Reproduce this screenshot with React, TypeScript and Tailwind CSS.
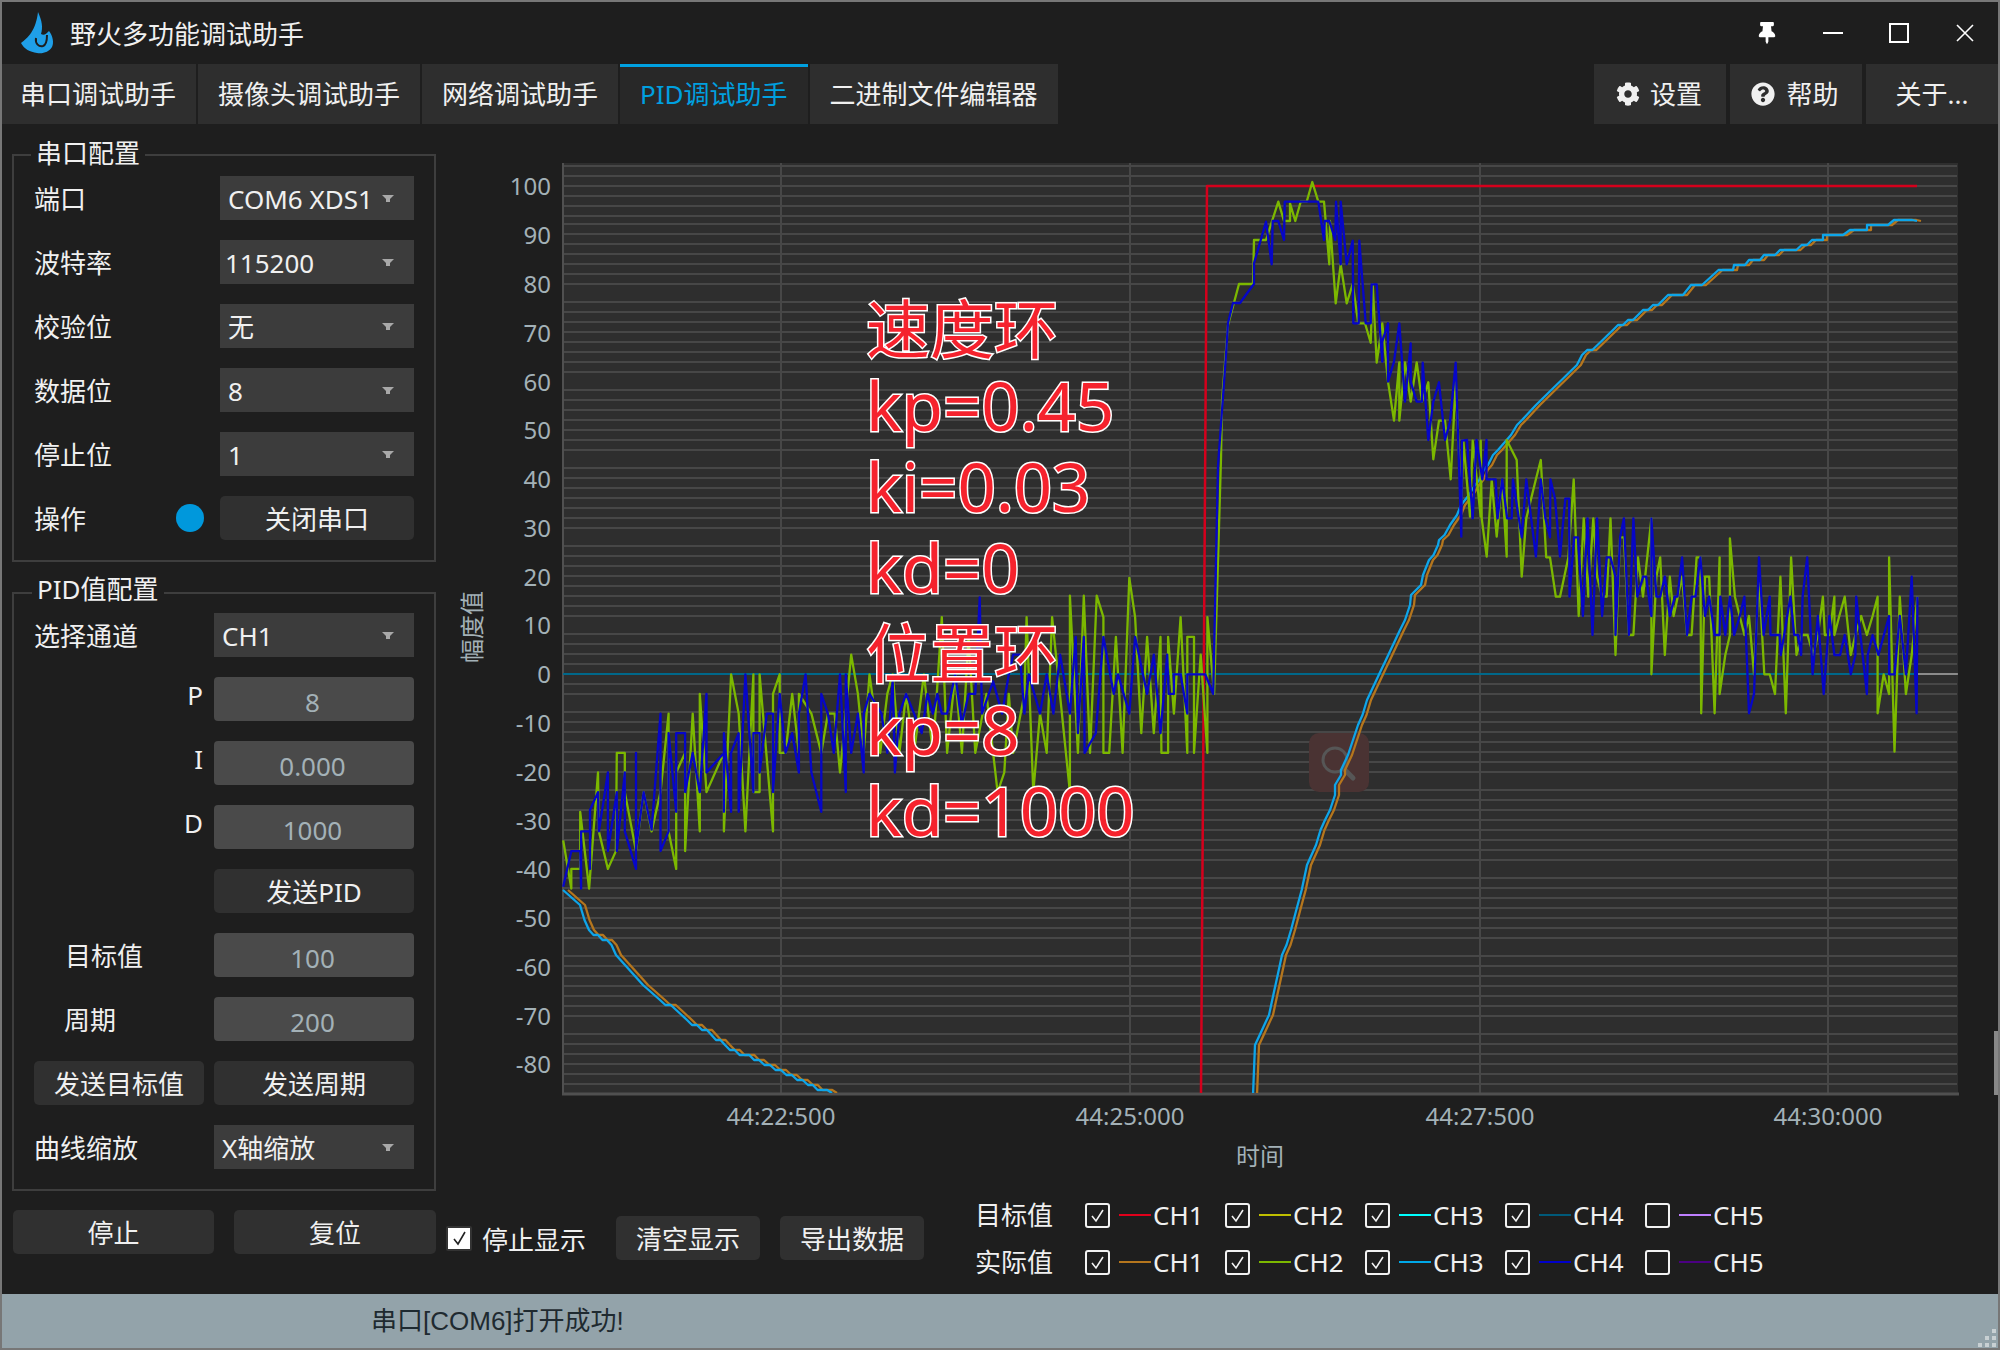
import { FaCog, FaQuestionCircle, FaThumbtack } from "react-icons/fa";

type Pt = [number, number];

const z6 = (p: number[]): Pt[] => pairs(p).map(([x, y]) => [540 + x / 2.24, 560 + y / 2.8]);
const z7 = (p: number[]): Pt[] => pairs(p).map(([x, y]) => [1400 + x / 2.613, 400 + y / 3]);
const z8 = (p: number[]): Pt[] => pairs(p).map(([x, y]) => [1250 + x / 3, 170 + y / 3]);

function pairs(p: number[]): Pt[] {
  const out: Pt[] = [];
  for (let i = 0; i < p.length; i += 2) out.push([p[i], p[i + 1]]);
  return out;
}

const toPath = (pts: Pt[]) => pts.map(([x, y], i) => `${i ? "L" : "M"}${x.toFixed(1)} ${y.toFixed(1)}`).join(" ");

// staircase look of the position curves
function stair(pts: Pt[], dx = 0): Pt[] {
  const out: Pt[] = [];
  for (let i = 0; i < pts.length - 1; i++) {
    const [x0, y0] = pts[i];
    const [x1, y1] = pts[i + 1];
    const n = Math.max(1, Math.round((x1 - x0) / 5));
    for (let k = 0; k < n; k++) {
      const t = k / n;
      out.push([x0 + (x1 - x0) * t + dx, Math.round((y0 + (y1 - y0) * t) / 5) * 5]);
    }
  }
  const last = pts[pts.length - 1];
  out.push([last[0] + dx, last[1]]);
  return out;
}

const blueNoise: Pt[] = [
  ...z6([52, 915, 70, 815, 90, 815, 92, 920, 92, 760, 112, 760, 112, 865, 112, 700, 130, 650, 132, 760, 152, 595, 152, 815, 172, 650, 172, 815, 190, 595, 190, 760, 215, 865, 215, 540, 215, 810, 232, 650, 250, 755, 270, 430, 270, 815, 288, 760, 288, 485, 305, 705, 305, 485, 325, 485, 325, 650, 342, 540, 358, 650, 373, 375, 373, 595, 412, 540, 412, 705, 412, 485, 428, 705, 428, 540, 445, 485, 445, 705, 460, 320, 478, 650, 478, 485, 492, 485, 492, 595, 508, 430, 522, 430, 522, 650, 537, 375, 550, 540, 565, 485, 580, 595, 580, 430, 595, 320, 608, 595, 630, 705, 630, 375, 645, 430, 658, 540, 672, 320, 685, 650, 685, 320, 697, 540, 712, 430, 725, 595, 725, 430, 738, 375, 765, 430, 778, 540, 790, 340, 795, 595, 805, 430, 820, 375, 838, 430, 855, 485, 868, 375, 880, 430, 890, 375, 900, 430, 912, 430, 930, 320, 945, 460, 960, 375, 975, 375, 985, 105, 990, 430, 1015, 340, 1035, 430, 1050, 320, 1060, 265, 1075, 265, 1085, 430, 1095, 320, 1120, 430, 1135, 320, 1150, 430, 1165, 265, 1187, 430, 1200, 215, 1205, 485, 1218, 215, 1220, 540, 1245, 485, 1262, 215, 1285, 375, 1295, 320, 1320, 430, 1333, 215, 1360, 375, 1375, 265, 1390, 485, 1405, 265, 1408, 375, 1420, 375, 1420, 320, 1435, 320, 1450, 430, 1450, 320, 1490, 320, 1508, 375]),
  [1218, 466], [1226, 355], [1228, 323], [1233, 303], [1240, 303],
  ...z8([0, 358, 12, 342, 12, 280, 48, 155, 65, 283, 68, 153, 85, 153, 102, 210, 104, 95, 205, 95, 222, 210, 224, 153, 238, 153, 256, 210, 258, 95, 272, 283, 272, 95, 290, 283, 308, 212, 310, 460, 326, 460, 328, 212, 347, 460, 362, 460, 365, 343, 380, 343, 397, 575, 397, 515, 414, 460, 414, 635, 432, 575, 448, 460, 465, 695, 482, 520, 482, 635, 500, 695, 516, 695, 518, 578, 535, 810, 550, 695, 567, 637, 585, 810, 600, 755, 617, 578, 634, 1100, 636, 812]),
  ...z7([175, 120, 190, 355, 200, 120, 215, 238, 226, 120, 226, 238, 250, 238, 255, 355, 267, 238, 280, 355, 292, 355, 295, 238, 318, 412, 330, 238, 355, 470, 368, 238, 380, 355, 392, 412, 393, 238, 405, 296, 418, 470, 432, 296, 442, 296, 443, 590, 455, 412, 465, 412, 478, 648, 490, 355, 503, 705, 515, 355, 528, 648, 540, 472, 550, 472, 563, 530, 563, 705, 575, 412, 585, 355, 598, 705, 610, 355, 620, 590, 635, 530, 643, 530, 657, 648, 657, 355, 670, 590, 680, 590, 692, 530, 705, 648, 718, 590, 725, 590, 737, 472, 750, 705, 762, 590, 772, 590, 785, 472, 797, 648, 808, 590, 822, 705, 835, 705, 837, 590, 850, 705, 862, 590, 873, 705, 888, 648, 900, 590, 912, 940, 925, 882, 938, 472, 950, 705, 966, 590, 968, 705, 992, 705, 995, 765, 1020, 590, 1030, 705, 1040, 705, 1048, 765, 1052, 590, 1064, 472, 1078, 823, 1092, 648, 1107, 882, 1122, 648, 1135, 765, 1150, 765, 1162, 705, 1178, 823, 1190, 765, 1192, 590, 1220, 882, 1222, 765, 1235, 705, 1250, 765, 1278, 648, 1278, 823, 1292, 823, 1306, 648, 1322, 823, 1337, 530, 1350, 940, 1352, 590]),
];

const greenNoise: Pt[] = [
  ...z6([52, 785, 70, 920, 70, 865, 90, 865, 90, 705, 110, 920, 130, 595, 132, 760, 152, 865, 170, 815, 172, 540, 190, 540, 190, 650, 215, 815, 232, 650, 250, 760, 270, 650, 288, 430, 288, 760, 305, 865, 305, 595, 325, 540, 325, 815, 342, 430, 358, 760, 358, 375, 373, 650, 412, 540, 412, 760, 428, 320, 445, 430, 460, 760, 478, 320, 478, 650, 492, 650, 492, 320, 522, 760, 522, 375, 537, 320, 537, 540, 550, 540, 565, 375, 580, 540, 580, 375, 608, 430, 630, 540, 645, 430, 660, 430, 672, 595, 697, 265, 712, 375, 725, 540, 738, 320, 762, 540, 778, 375, 790, 320, 805, 540, 820, 375, 838, 540, 860, 320, 880, 540, 900, 160, 912, 540, 930, 320, 945, 540, 960, 215, 975, 540, 1000, 375, 1025, 650, 1040, 595, 1050, 375, 1060, 540, 1085, 375, 1090, 160, 1105, 650, 1120, 430, 1135, 540, 1147, 160, 1187, 650, 1187, 100, 1205, 540, 1218, 100, 1232, 540, 1247, 100, 1262, 160, 1262, 540, 1275, 540, 1290, 215, 1305, 540, 1320, 50, 1333, 160, 1347, 485, 1360, 215, 1375, 485, 1390, 215, 1392, 540, 1407, 540, 1407, 215, 1420, 430, 1435, 160, 1450, 540, 1450, 215, 1465, 215, 1465, 540, 1480, 265, 1495, 540, 1495, 160, 1510, 375]),
  [1221, 458], [1222, 401], [1228, 325], [1239, 284], [1253, 284],
  ...z8([12, 210, 30, 210, 48, 210, 85, 95, 102, 153, 120, 153, 120, 100, 136, 153, 152, 95, 170, 95, 187, 36, 205, 95, 222, 95, 238, 283, 240, 153, 257, 400, 272, 283, 290, 400, 308, 342, 325, 460, 345, 460, 362, 518, 368, 343, 380, 578, 397, 460, 414, 635, 432, 752, 448, 577, 448, 752, 465, 577, 482, 695, 500, 577, 516, 695, 535, 637, 550, 868, 567, 752, 585, 752, 602, 928, 617, 637, 634, 1000, 640, 812, 660, 1040, 668, 812, 692, 1040, 692, 812, 695, 1045, 710, 1160, 725, 930, 740, 1100, 756, 930, 770, 1160, 770, 810]),
  ...z7([305, 180, 318, 530, 330, 355, 355, 238, 368, 180, 382, 472, 392, 472, 407, 590, 418, 590, 440, 472, 454, 238, 467, 648, 480, 355, 492, 590, 505, 355, 515, 530, 528, 590, 540, 590, 550, 355, 563, 765, 575, 412, 585, 412, 598, 705, 610, 705, 622, 472, 635, 590, 657, 355, 657, 823, 670, 530, 680, 472, 692, 765, 705, 530, 715, 648, 737, 530, 750, 705, 762, 705, 775, 472, 785, 472, 787, 940, 797, 530, 808, 530, 822, 940, 835, 472, 835, 882, 850, 765, 862, 705, 862, 415, 875, 590, 900, 705, 912, 648, 925, 823, 938, 530, 952, 823, 966, 823, 980, 882, 994, 530, 1008, 940, 1022, 472, 1036, 765, 1050, 705, 1065, 705, 1080, 765, 1092, 705, 1105, 590, 1110, 705, 1122, 705, 1135, 590, 1135, 705, 1148, 648, 1162, 590, 1178, 765, 1190, 705, 1205, 648, 1220, 705, 1235, 648, 1248, 590, 1248, 940, 1264, 823, 1278, 882, 1278, 472, 1292, 1055, 1306, 590, 1322, 882, 1337, 765, 1352, 590]),
];

const fallCurve: Pt[] = [[563, 892], [580, 905], [589, 930], [607, 942], [625, 963], [643, 985], [660, 999], [687, 1020], [707, 1031], [725, 1046], [759, 1062], [781, 1071], [808, 1085], [832, 1093]];

const riseCurve: Pt[] = [
  [1253, 1093], [1255, 1046], [1269, 1014], [1282, 957], [1291, 931], [1307, 867], [1325, 820], [1335, 797], [1335, 787], [1341, 777], [1341, 768], [1348, 757], [1353, 738], [1358, 725], [1367, 700],
  [1400, 630], [1410, 607], [1411, 597], [1421, 583], [1423, 577], [1429, 560], [1438, 547], [1439, 540], [1450, 527], [1457, 513], [1461, 507], [1469, 497], [1475, 487], [1488, 463], [1498, 450], [1511, 437], [1517, 426], [1522, 420], [1536, 407],
  [1582, 357], [1613, 329], [1658, 304], [1673, 294], [1683, 294], [1691, 284], [1702, 284], [1713, 274], [1724, 269], [1733, 269], [1734, 265], [1745, 265], [1749, 260], [1760, 260], [1764, 255], [1775, 255], [1780, 250], [1791, 250], [1807, 246], [1812, 241], [1823, 241], [1823, 236], [1843, 236], [1850, 231], [1867, 231], [1867, 226], [1888, 226], [1894, 221], [1917, 221],
];

// the grid has a short step every 8 or 9 lines
function gridLines(): number[] {
  const out = [166, 176, 186, 196, 206, 216];
  const anchors = [224, 302, 390, 468, 546, 634, 712, 790, 878, 956, 1034, 1102];
  for (let i = 0; i < anchors.length - 1; i++) {
    for (let y = anchors[i]; y < anchors[i + 1] - 8; y += 10) out.push(y);
  }
  return out;
}

const yLabels = [100, 90, 80, 70, 60, 50, 40, 30, 20, 10, 0, -10, -20, -30, -40, -50, -60, -70, -80];
const xTicks: [number, string][] = [
  [781, "44:22:500"],
  [1130, "44:25:000"],
  [1480, "44:27:500"],
  [1828, "44:30:000"],
];

function Chart() {
  return (
    <svg viewBox="440 124 1558 1067" className="block h-[1067px] w-[1558px]">
      <defs>
        <clipPath id="plot">
          <rect x="562" y="160" width="1396" height="933" />
        </clipPath>
      </defs>
      <rect x="562" y="163" width="1396" height="931" fill="#2e2e2e" />
      {gridLines().map((y) => (
        <line key={y} x1="562" x2="1957" y1={y} y2={y} stroke="#474747" strokeWidth="2" />
      ))}
      {xTicks.map(([x]) => (
        <line key={x} x1={x} x2={x} y1="163" y2="1094" stroke="#474747" strokeWidth="2" />
      ))}
      <line x1="563" x2="563" y1="163" y2="1094" stroke="#505050" strokeWidth="2" />
      <line x1="562" x2="1959" y1="1094" y2="1094" stroke="#505050" strokeWidth="3" />

      <rect x="1309" y="733" width="60" height="59" rx="10" fill="#4a3333" />
      <circle cx="1335" cy="760" r="12" fill="none" stroke="#565656" strokeWidth="3" />
      <path d="M1345 770 L1353 778" stroke="#565656" strokeWidth="5" strokeLinecap="round" />

      <line x1="1917" x2="1958" y1="674" y2="674" stroke="#cfcfcf" strokeWidth="1" />
      <line x1="563" x2="1917" y1="674" y2="674" stroke="#00688a" strokeWidth="2" />
      <g clipPath="url(#plot)" fill="none" strokeWidth="2.3" strokeLinejoin="round">
        <path d="M1201 1093 L1207 186 L1917 186" stroke="#d5001c" strokeWidth="2.5" />
        <path d={toPath(stair(fallCurve, 5))} stroke="#b5761d" />
        <path d={toPath(stair(riseCurve, 4))} stroke="#b5761d" />
        <path d={toPath(stair(fallCurve))} stroke="#0ea5e9" />
        <path d={toPath(stair(riseCurve))} stroke="#0ea5e9" />
        <path d={toPath(greenNoise)} stroke="#7cb800" />
        <path d={toPath(blueNoise)} stroke="#0606c8" />
      </g>

      <g className="fill-[#a3b1b7] text-[24px]">
        {yLabels.map((v, i) => (
          <text key={v} x="551" y={189 + i * 48.78} textAnchor="end" dominantBaseline="middle">
            {v}
          </text>
        ))}
        {xTicks.map(([x, label]) => (
          <text key={x} x={x} y="1119" textAnchor="middle" dominantBaseline="middle">
            {label}
          </text>
        ))}
        <text x="1260" y="1159" textAnchor="middle" dominantBaseline="middle">
          时间
        </text>
        <text x="475" y="627" textAnchor="middle" dominantBaseline="middle" transform="rotate(-90 475 627)">
          幅度值
        </text>
      </g>
    </svg>
  );
}

function Caret() {
  return (
    <svg width="12" height="8" viewBox="0 0 12 8" className="mt-[2px] shrink-0">
      <path d="M0 0H12L8 4V7H4V4Z" fill="#a8a8a8" />
    </svg>
  );
}

function Select({ value, width = "w-[194px]", pl = "pl-2" }: { value: string; width?: string; pl?: string }) {
  return (
    <div className={`flex h-[44px] ${width} shrink-0 items-center bg-[#3c3c3c] ${pl} pr-[20px]`}>
      <span className="mr-[8px] min-w-0 flex-1 overflow-hidden whitespace-nowrap pt-[2px] leading-[36px]">{value}</span>
      <Caret />
    </div>
  );
}

function Button({ label, className = "" }: { label: string; className?: string }) {
  return (
    <div className={`flex h-[44px] items-center justify-center rounded-[5px] bg-[#303030] pt-[2px] ${className}`}>{label}</div>
  );
}

function Input({ value }: { value: string }) {
  return (
    <div className="flex h-[44px] w-[200px] shrink-0 items-center justify-center rounded-[4px] bg-[#4a4a4a] pr-[3px] pt-[5px] text-[#a3b1b7]">
      {value}
    </div>
  );
}

function Group({ title, titleLeft, titleTop, className, children }: { title: string; titleLeft: string; titleTop: string; className: string; children: React.ReactNode }) {
  return (
    <div className={`relative ml-[10px] w-[424px] border-2 border-[#3e3e3e] pl-5 pr-5 ${className}`}>
      <span className={`absolute bg-[#1e1e1e] px-[5px] leading-[36px] ${titleTop} ${titleLeft}`}>{title}</span>
      {children}
    </div>
  );
}

const serialRows = [
  { label: "端口", value: "COM6 XDS110 Class" },
  { label: "波特率", value: "115200", pl: "pl-[5px]" },
  { label: "校验位", value: "无" },
  { label: "数据位", value: "8" },
  { label: "停止位", value: "1" },
];

const pidInputs = [
  { label: "P", value: "8" },
  { label: "I", value: "0.000" },
  { label: "D", value: "1000" },
];

function Sidebar() {
  return (
    <div className="flex w-[438px] shrink-0 flex-col gap-[30px] pt-[30px]">
      <Group title="串口配置" titleLeft="left-[17px]" titleTop="top-[-21px]" className="flex h-[408px] flex-col gap-5 pt-5">
        {serialRows.map((row) => (
          <div key={row.label} className="flex h-[44px] items-center justify-between">
            <span className="pt-[2px]">{row.label}</span>
            <Select value={row.value} pl={row.pl} />
          </div>
        ))}
        <div className="flex h-[44px] items-center">
          <span className="flex-1 pt-[2px]">操作</span>
          <span className="mr-[16px] h-7 w-7 rounded-full bg-[#0098dc]" />
          <Button label="关闭串口" className="w-[194px]" />
        </div>
      </Group>

      <Group title="PID值配置" titleLeft="left-[18px]" titleTop="top-[-23px]" className="flex h-[599px] flex-col gap-5 pt-[19px]">
        <div className="flex h-[44px] items-center justify-between">
          <span className="pt-[2px]">选择通道</span>
          <Select value="CH1" width="w-[200px]" pl="pl-[8px]" />
        </div>
        {pidInputs.map((row) => (
          <div key={row.label} className="flex h-[44px] items-center justify-end gap-[11px]">
            <span className="-mt-2">{row.label}</span>
            <Input value={row.value} />
          </div>
        ))}
        <div className="flex justify-end">
          <Button label="发送PID" className="w-[200px]" />
        </div>
        <div className="flex h-[44px] items-center justify-between pl-[31px]">
          <span className="pt-[2px]">目标值</span>
          <Input value="100" />
        </div>
        <div className="flex h-[44px] items-center justify-between pl-[30px]">
          <span className="pt-[2px]">周期</span>
          <Input value="200" />
        </div>
        <div className="flex gap-[10px]">
          <Button label="发送目标值" className="w-[170px]" />
          <Button label="发送周期" className="w-[200px]" />
        </div>
        <div className="flex h-[44px] items-center justify-between">
          <span className="pt-[2px]">曲线缩放</span>
          <Select value="X轴缩放" width="w-[200px]" pl="pl-[8px]" />
        </div>
      </Group>
    </div>
  );
}

const legendRows = [
  { label: "目标值", colors: ["#e0001b", "#bfbf00", "#00ffff", "#005a7a", "#bf80ff"] },
  { label: "实际值", colors: ["#b5761d", "#7cb800", "#00a8e8", "#0000cc", "#4b0082"] },
];

function Check({ checked }: { checked: boolean }) {
  return (
    <span className="flex h-[25px] w-[25px] shrink-0 items-center justify-center rounded-[3px] border-2 border-[#f2f2f2]">
      {checked && (
        <svg width="15" height="15" viewBox="0 0 15 15">
          <path d="M2 8L6 13L13 2" fill="none" stroke="#f2f2f2" strokeWidth="1.6" />
        </svg>
      )}
    </span>
  );
}

function Legend() {
  return (
    <div className="ml-[51px] mt-[8px] flex flex-col gap-[15px]">
      {legendRows.map((row) => (
        <div key={row.label} className="flex h-[32px] items-center">
          <span className="w-[110px]">{row.label}</span>
          <div className="flex gap-[6px]">
            {row.colors.map((color, i) => (
              <div key={color} className="flex w-[134px] items-center">
                <Check checked={i < 4} />
                <span className="ml-[9px] h-[2px] w-[32px]" style={{ backgroundColor: color }} />
                <span className="ml-[2px]">CH{i + 1}</span>
              </div>
            ))}
          </div>
        </div>
      ))}
    </div>
  );
}

function BottomRow() {
  return (
    <div className="flex h-[103px] items-start pl-[11px]">
      <Button label="停止" className="mt-[19px] w-[201px]" />
      <Button label="复位" className="ml-5 mt-[19px] w-[202px]" />
      <div className="ml-[10px] mt-[32px] flex items-center gap-[10px]">
        <span className="flex h-[25px] w-[26px] items-center justify-center rounded-[2px] border-2 border-[#333] bg-white">
          <svg width="15" height="16" viewBox="0 0 15 16">
            <path d="M2 9L6 14L13 2" fill="none" stroke="#222" strokeWidth="1.6" />
          </svg>
        </span>
        <span className="pt-[4px]">停止显示</span>
      </div>
      <Button label="清空显示" className="ml-[30px] mt-[25px] w-[144px]" />
      <Button label="导出数据" className="ml-5 mt-[25px] w-[144px]" />
      <Legend />
    </div>
  );
}

function Flame() {
  return (
    <svg width="40" height="46" viewBox="16 10 40 46" className="shrink-0">
      <path
        d="M37 12C41 21 42 27 40 34C43 36 45 34 48 31C52 36 53 43 51 47C48 52 42 54 36 53C29 52 23 49 20 43C27 38 35 30 37 12Z"
        fill="#1f9fe8"
      />
      <path d="M35 38C34 44 38 47 42 46C45 45 46 40 46 35" fill="none" stroke="#1e1e1e" strokeWidth="2" />
    </svg>
  );
}

const leftTabs = ["摄像头调试助手", "网络调试助手"];

const annotation = [
  { text: "速度环", cjk: true },
  { text: "kp=0.45", cjk: false },
  { text: "ki=0.03", cjk: false },
  { text: "kd=0", cjk: false },
  { text: "位置环", cjk: true },
  { text: "kp=8", cjk: false },
  { text: "kd=1000", cjk: false },
];

export default function App() {
  return (
    <div className="relative flex h-[1350px] w-[2000px] flex-col overflow-hidden border-2 border-[#777] bg-[#1e1e1e] font-['Noto_Sans','Noto_Sans_CJK_SC',sans-serif] text-[26px] leading-none text-[#f0f0f0]">
      <div className="flex h-[62px] shrink-0 items-center pl-[15px]">
        <Flame />
        <span className="ml-[13px] pt-[1px]">野火多功能调试助手</span>
        <div className="ml-auto flex items-center">
          <FaThumbtack className="mr-[45px] text-[22px] text-white" />
          <span className="mr-[46px] h-[2px] w-[20px] bg-white" />
          <span className="mr-[47px] h-[20px] w-[20px] border-2 border-white" />
          <svg width="18" height="18" viewBox="0 0 18 18" className="mr-[24px]">
            <path d="M1 1L17 17M17 1L1 17" stroke="#fff" strokeWidth="1.6" />
          </svg>
        </div>
      </div>

      <div className="flex h-[60px] shrink-0 items-stretch gap-[2px]">
        <div className="flex items-center bg-[#2e2e2e] pl-[18px] pr-5">串口调试助手</div>
        {leftTabs.map((tab) => (
          <div key={tab} className="flex items-center bg-[#2e2e2e] px-5">
            {tab}
          </div>
        ))}
        <div className="flex items-center border-t-[3px] border-[#00a0e0] bg-[#282828] px-5 pb-[3px] text-[#00a0e0]">PID调试助手</div>
        <div className="flex items-center bg-[#2e2e2e] px-5">二进制文件编辑器</div>
        <div className="ml-auto flex w-[132px] items-center justify-center gap-[10px] bg-[#2e2e2e] pr-[2px]">
          <FaCog className="text-[24px]" />
          设置
        </div>
        <div className="ml-[2px] flex w-[132px] items-center justify-center gap-[11px] bg-[#2e2e2e] pr-[2px]">
          <FaQuestionCircle className="text-[24px]" />
          帮助
        </div>
        <div className="ml-[2px] flex w-[132px] items-center justify-center bg-[#2e2e2e]">关于...</div>
      </div>

      <div className="flex h-[1067px] shrink-0">
        <Sidebar />
        <div className="relative">
          <Chart />
          <div className="absolute left-[426px] top-[160px] text-[#f5222d] [-webkit-text-stroke:3px_#ffffff] [paint-order:stroke_fill]">
            {annotation.map((line) => (
              <div key={line.text} className={line.cjk ? "h-[81px] pt-[4px] text-[64px] leading-[81px]" : "h-[81px] text-[67px] leading-[81px]"}>
                {line.text}
              </div>
            ))}
          </div>
        </div>
      </div>

      <BottomRow />

      <div className="flex flex-1 items-center bg-[#93a3aa] pl-[369px] font-['Liberation_Sans','Noto_Sans_CJK_SC',sans-serif] text-[#1f2a30]">
        串口[COM6]打开成功!
      </div>

      <span className="absolute left-[1992px] top-[1029px] h-[64px] w-1 bg-[#888]" />
      <svg width="18" height="18" viewBox="0 0 18 18" className="absolute bottom-[1px] right-[2px]">
        <path d="M14 0h4v4h-4zM7 7h4v4H7zM14 7h4v4h-4zM0 14h4v4H0zM7 14h4v4H7zM14 14h4v4h-4z" fill="#c8d0d3" />
      </svg>
    </div>
  );
}
